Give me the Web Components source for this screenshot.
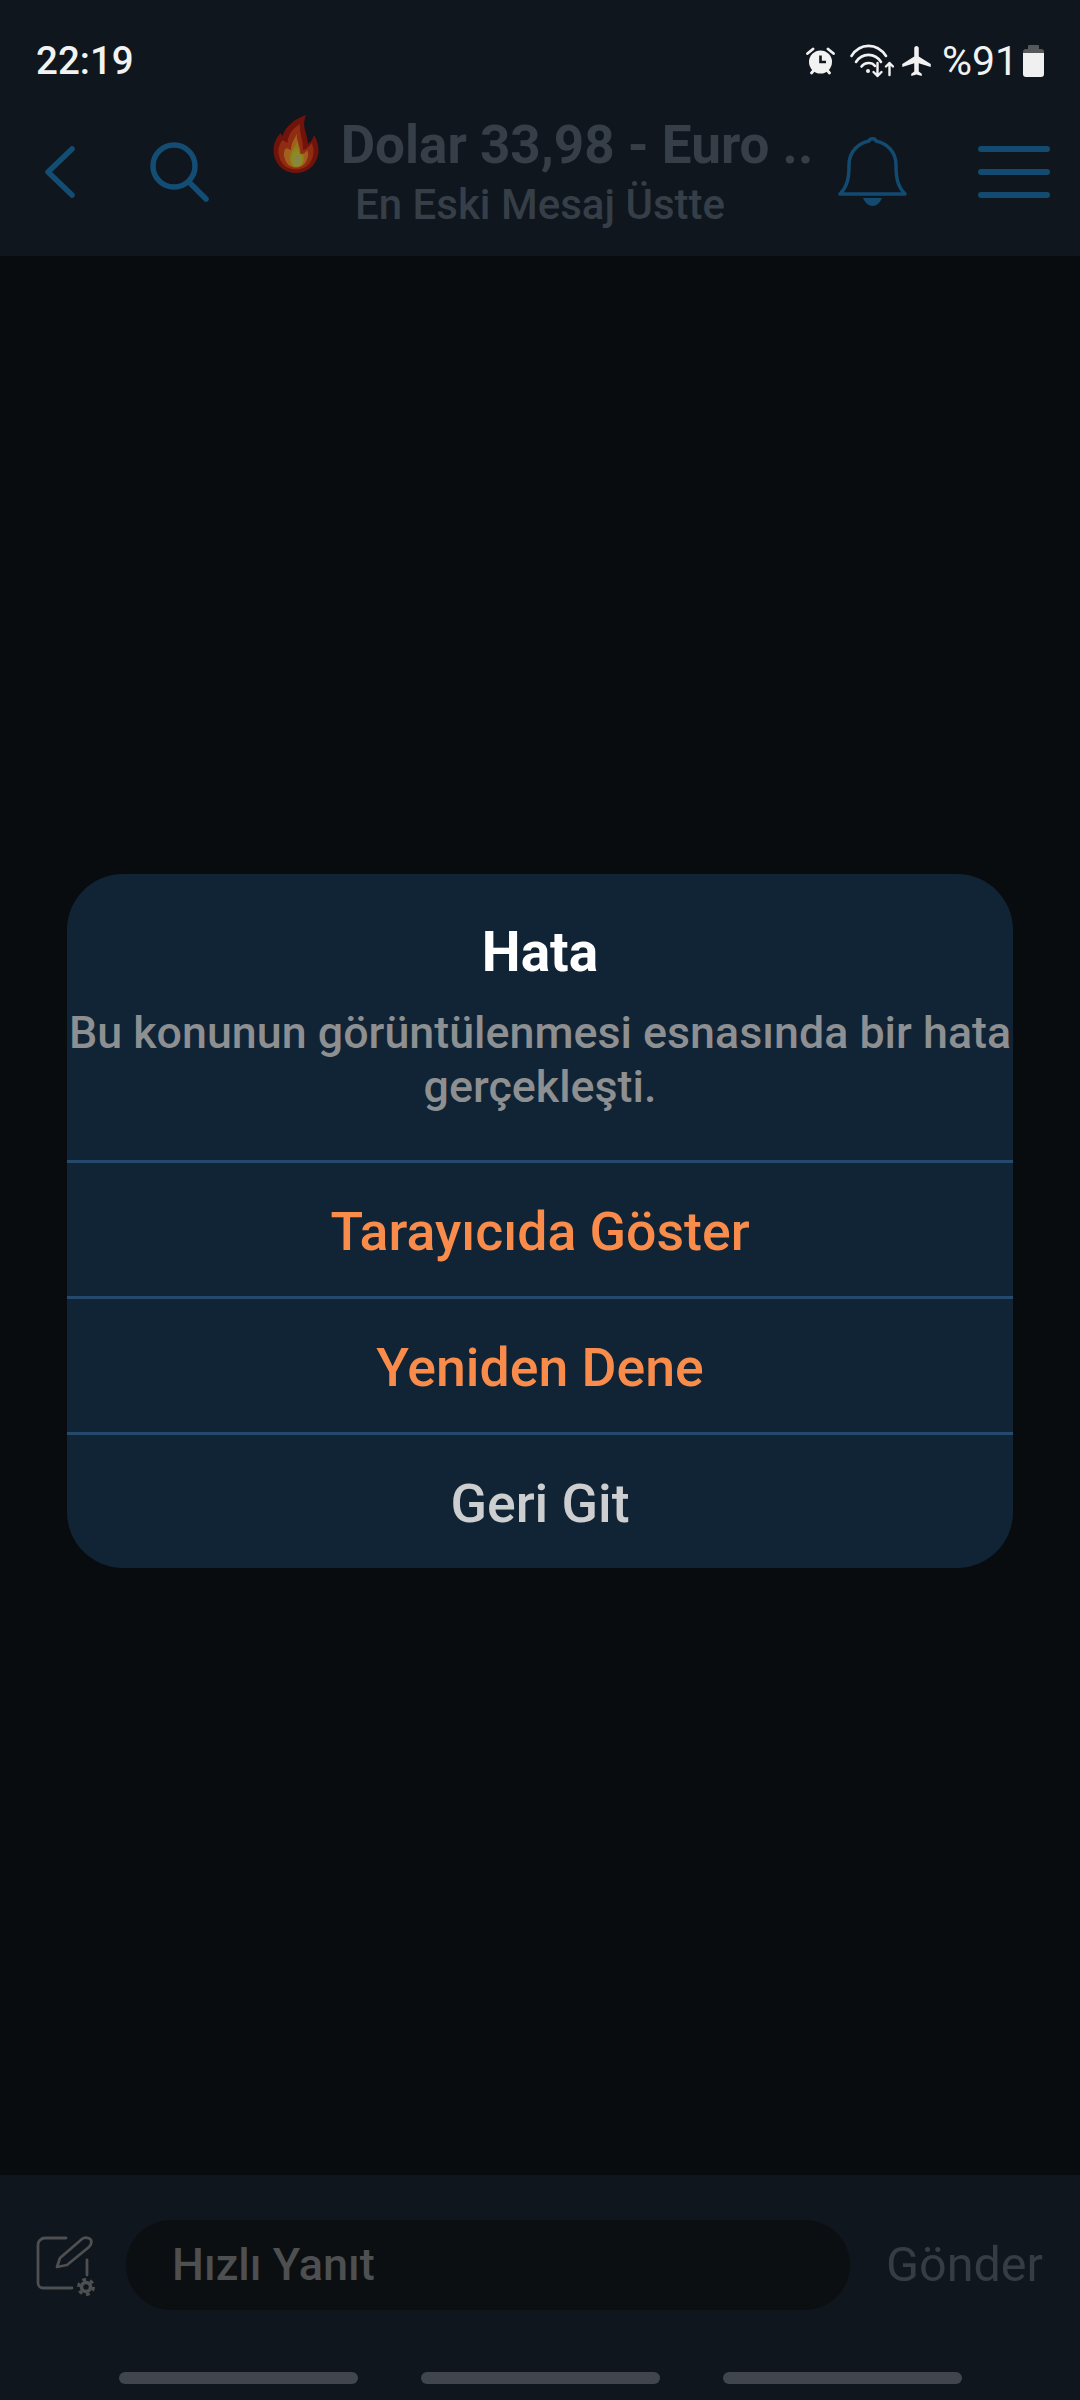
<!DOCTYPE html>
<html lang="tr">
<head>
<meta charset="utf-8">
<title>Hata</title>
<style>
  html, body { margin: 0; height: 100%; background: #090c0f; }
  body { font-family: Roboto, "Noto Sans", sans-serif; }
  app-screen { height: 2400px; }
</style>
</head>
<body>
<app-screen>
  <status-bar slot="top" time="22:19" level="%91"></status-bar>
  <topic-header slot="top" heading="Dolar 33,98 - Euro .." sub="En Eski Mesaj Üstte"></topic-header>
  <error-dialog heading="Hata" message="Bu konunun görüntülenmesi esnasında bir hata gerçekleşti.">
    <dialog-action tone="accent">Tarayıcıda Göster</dialog-action>
    <dialog-action tone="accent">Yeniden Dene</dialog-action>
    <dialog-action>Geri Git</dialog-action>
  </error-dialog>
  <reply-bar slot="bottom" placeholder="Hızlı Yanıt" send="Gönder"></reply-bar>
  <nav-pills slot="bottom"></nav-pills>
</app-screen>

<script>
class AppScreen extends HTMLElement {
  connectedCallback() {
    this.attachShadow({ mode: 'open' });
    this.shadowRoot.innerHTML = `
      <style>
        :host { display: flex; flex-direction: column; width: 1080px; background: #090c0f; }
        .top { background: #0f161e; flex: none; }
        main { flex: 1; display: flex; align-items: center; justify-content: center; padding-top: 11px; }
        .bottom { background: #0f161e; flex: none; }
      </style>
      <div class="top"><slot name="top"></slot></div>
      <main><slot></slot></main>
      <div class="bottom"><slot name="bottom"></slot></div>
    `;
  }
}

class StatusBar extends HTMLElement {
  connectedCallback() {
    this.attachShadow({ mode: 'open' });
    this.shadowRoot.innerHTML = `
      <style>
        :host { display: flex; align-items: center; height: 100px; padding: 22px 36px 0 36px; color: #f2f2f2; box-sizing: border-box; }
        .time { font-size: 38.500px; font-weight: 500; flex: 1; line-height: 38px; }
        .icons { display: flex; align-items: center; }
        .level { font-size: 41px; line-height: 38px; margin: 0 5px 0 10px; }
        svg { display: block; flex: none; }
        .wifi { margin: 0 7px 0 15px; }
      </style>
      <span class="time">${this.getAttribute('time')}</span>
      <div class="icons">
        <svg width="29" height="28" viewBox="0 0 29 28">
          <circle cx="14.500" cy="15" r="11.500" fill="#f2f2f2"/>
          <path d="M14.500 8.500V15H20" fill="none" stroke="#0f161e" stroke-width="2.600"/>
          <path d="M1.500 6.500 7 2M27.500 6.500 22 2M5.500 26l2.500-3M23.500 26 21 23" stroke="#f2f2f2" stroke-width="2.800" stroke-linecap="round"/>
        </svg>
        <svg class="wifi" width="44" height="34" viewBox="0 0 44 34" fill="none" stroke="#f2f2f2" stroke-linecap="round" stroke-linejoin="round">
          <path d="M1.500 12C10 -1.500 27 -1.500 36 12" stroke-width="2.600"/>
          <path d="M6 18C12 8.500 25 8.500 31 18" stroke-width="2.600"/>
          <path d="M11.500 22.500C15 18 22 18 25 22" stroke-width="2.600"/>
          <circle cx="18" cy="27" r="2" fill="#f2f2f2" stroke="none"/>
          <path d="M27.500 19V32M23.500 28 27.500 32 31.500 28" stroke-width="2.400"/>
          <path d="M39.500 31V19M36 22.500 39.500 19 43 22.500" stroke-width="2.400"/>
        </svg>
        <svg width="31" height="30" viewBox="2 2 19 20"><path fill="#f2f2f2" d="M21 16v-2l-8-5V3.500c0-.83-.67-1.500-1.500-1.500S10 2.670 10 3.500V9l-8 5v2l8-2.500V19l-2 1.500V22l3.500-1 3.500 1v-1.500L13 19v-5.500l8 2.500z"/></svg>
        <span class="level">${this.getAttribute('level')}</span>
        <svg width="21" height="32" viewBox="0 0 21 32">
          <path fill="#56595c" d="M6 0h9a1 1 0 0 1 1 1v3h2a3 3 0 0 1 3 3v2H0V7a3 3 0 0 1 3-3h2V1a1 1 0 0 1 1-1z"/>
          <path fill="#f0f0f0" d="M0 8h21v21a3 3 0 0 1-3 3H3a3 3 0 0 1-3-3z"/>
        </svg>
      </div>
    `;
  }
}

class TopicHeader extends HTMLElement {
  connectedCallback() {
    this.attachShadow({ mode: 'open' });
    this.shadowRoot.innerHTML = `
      <style>
        :host { display: flex; align-items: flex-start; height: 156px; box-sizing: border-box; padding-left: 45px; }
        svg { display: block; flex: none; }
        .back { margin-top: 46px; }
        .search { margin: 42px 0 0 75px; }
        .title { flex: none; width: 628px; box-sizing: border-box; padding-left: 32px; display: flex; flex-direction: column; align-items: center; color: #363e47; }
        .line { display: flex; align-items: flex-start; height: 62px; margin-left: 6px; padding-top: 15px; }
        .flame { margin-right: 22px; }
        h1 { margin: 0; font-size: 53px; line-height: 60px; font-weight: 700; white-space: nowrap; }
        .sub { font-size: 42px; line-height: 48px; font-weight: 500; margin-top: 4px; white-space: nowrap; }
        .bell { margin-top: 37px; }
        .menu { margin: 46px 0 0 71px; width: 72px; display: flex; flex-direction: column; gap: 17px; }
        .menu i { display: block; height: 6px; border-radius: 3px; background: #134a70; }
      </style>
      <svg class="back" width="30" height="52" viewBox="0 0 30 52" fill="none" stroke="#144d74" stroke-width="5.500" stroke-linecap="round" stroke-linejoin="round"><path d="M27 3 3 26l24 23"/></svg>
      <svg class="search" width="60" height="60" viewBox="0 0 60 60" fill="none" stroke="#144d74" stroke-width="5.500" stroke-linecap="round"><circle cx="24" cy="24" r="21"/><path d="M39 40 56 57"/></svg>
      <div class="title">
        <div class="line">
          <svg class="flame" width="46" height="58" viewBox="0 0 46 58">
            <defs><radialGradient id="core" cx=".5" cy=".72" r=".5"><stop offset="0" stop-color="#80806e"/><stop offset=".55" stop-color="#8d8b1e"/><stop offset="1" stop-color="#8b7d18"/></radialGradient></defs>
            <path fill="#6f130b" d="M33 0C21 4 12 12 9.500 21L7.500 18C3 23 .5 29 .5 35 .5 48 10 58 23 58s22.500-10 22.500-23c0-6-2-11-4.500-15C40 24 38 27 35 29 35 19 28 12 33 0z"/>
            <path fill="#8f2c12" d="M27 9C19 14 15 20 14.500 28L9.500 25C6 30 5 34 5.500 38 6.500 48 13 54.500 23 54.500S39.500 48 40.500 38C41 34 40 31 38.500 28 36.500 31 34 34 30 35 30.500 25 26 18 27 9z"/>
            <path fill="#a2601f" d="M24 19C21 24 18 29 18 35L13 33C10.500 36 10.500 40 11.500 43 13.500 50 18 52.500 23 52.500S32.500 50 34.500 43C35.500 40 35.500 37 34 35 32.500 38 30 39 27.500 39 28 32 23 26 24 19z"/>
            <path fill="url(#core)" d="M25 26C22 31 19 35 17.500 39 15.500 44 18 52 23 52S32 47 31 42C30.500 38 28.500 40 27 39 26 35 24.500 31 25 26z"/>
          </svg>
          <h1>${this.getAttribute('heading')}</h1>
        </div>
        <div class="sub">${this.getAttribute('sub')}</div>
      </div>
      <svg class="bell" width="69" height="69" viewBox="0 0 69 69">
        <path fill="none" stroke="#134a70" stroke-width="3.500" stroke-linejoin="round" d="M2 57H67C60 50 58 42 58 28 58 14 48 6 38 4 37 1 32 1 31 4 21 6 11 14 11 28 11 42 9 50 2 57Z"/>
        <path fill="#134a70" d="M25 61H44C42 66 38 69 34.500 69 31 69 27 66 25 61Z"/>
      </svg>
      <div class="menu"><i></i><i></i><i></i></div>
    `;
  }
}

class ErrorDialog extends HTMLElement {
  connectedCallback() {
    this.attachShadow({ mode: 'open' });
    this.shadowRoot.innerHTML = `
      <style>
        :host { display: block; width: 946px; height: 694px; background: #102436; border-radius: 56px; overflow: hidden; }
        .head { height: 286px; box-sizing: border-box; padding-top: 46px; text-align: center; }
        h2 { margin: 0; font-size: 55px; line-height: 64px; font-weight: 700; color: #fff; }
        p { margin: 22px 0 0; font-size: 44.800px; line-height: 54px; font-weight: 500; color: #8d8f91; }
      </style>
      <div class="head">
        <h2>${this.getAttribute('heading')}</h2>
        <p>${this.getAttribute('message')}</p>
      </div>
      <slot></slot>
    `;
  }
}

class DialogAction extends HTMLElement {
  connectedCallback() {
    this.attachShadow({ mode: 'open' });
    const color = this.getAttribute('tone') === 'accent' ? '#f98c4b' : '#cdced0';
    this.shadowRoot.innerHTML = `
      <style>
        :host { display: flex; align-items: center; justify-content: center; height: 136px; box-sizing: border-box; border-top: 3px solid #264a6c; padding-top: 4px; color: ${color}; font-size: 53.600px; font-weight: 500; }
      </style>
      <slot></slot>
    `;
  }
}

class ReplyBar extends HTMLElement {
  connectedCallback() {
    this.attachShadow({ mode: 'open' });
    this.shadowRoot.innerHTML = `
      <style>
        :host { display: flex; align-items: center; height: 179px; box-sizing: border-box; padding: 0 37px 0 36px; }
        svg { display: block; flex: none; margin-top: 2px; }
        .field { margin-left: 30px; width: 724px; height: 90px; flex: none; box-sizing: border-box; padding-left: 46px; border-radius: 45px; background: #0b0f12; color: #4e4f50; font-size: 45px; font-weight: 500; line-height: 90px; }
        .send { margin-left: auto; color: #363c44; font-size: 48.500px; line-height: 90px; }
      </style>
      <svg width="60" height="60" viewBox="0 0 60 60" fill="none" stroke="#4e4f50" stroke-width="2.800" stroke-linecap="round" stroke-linejoin="round">
        <path d="M30 2H9a7 7 0 0 0-7 7v38a5 5 0 0 0 5 5h29"/>
        <path d="M51 24V39"/>
        <path d="M21 31 24 22 46 3C49 .5 54 2 55 4 56 7 55 9 53 11L31 29z"/>
        <circle cx="50" cy="51" r="4.500" stroke-width="3.500"/>
        <circle cx="50" cy="51" r="7.500" stroke-width="3" stroke-linecap="butt" stroke-dasharray="3.900 3.950"/>
      </svg>
      <div class="field">${this.getAttribute('placeholder')}</div>
      <span class="send">${this.getAttribute('send')}</span>
    `;
  }
}

class NavPills extends HTMLElement {
  connectedCallback() {
    this.attachShadow({ mode: 'open' });
    this.shadowRoot.innerHTML = `
      <style>
        :host { display: flex; justify-content: center; gap: 63px; height: 46px; box-sizing: border-box; padding-top: 18px; }
        i { display: block; width: 239px; height: 12px; border-radius: 6px; background: #41454d; }
      </style>
      <i></i><i></i><i></i>
    `;
  }
}

customElements.define('app-screen', AppScreen);
customElements.define('status-bar', StatusBar);
customElements.define('topic-header', TopicHeader);
customElements.define('error-dialog', ErrorDialog);
customElements.define('dialog-action', DialogAction);
customElements.define('reply-bar', ReplyBar);
customElements.define('nav-pills', NavPills);
</script>
</body>
</html>
